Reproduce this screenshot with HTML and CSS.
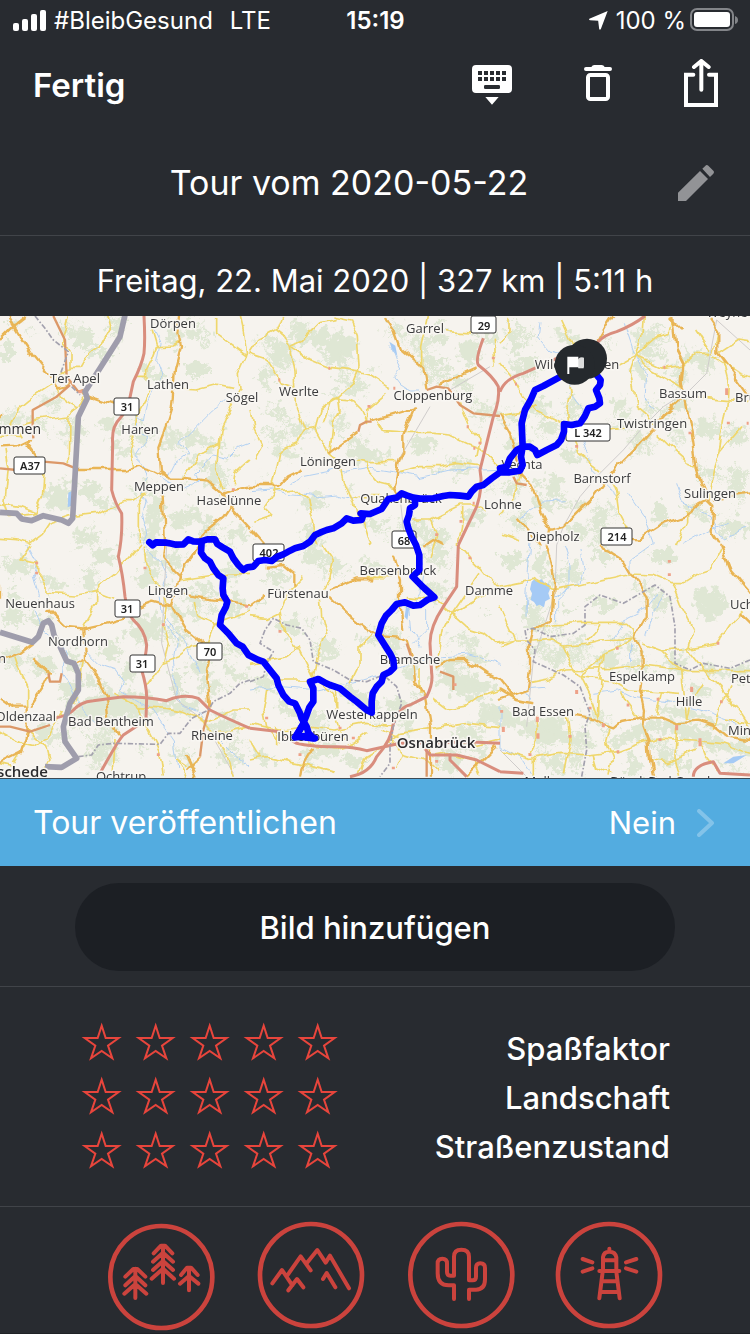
FILE: index.html
```html
<!DOCTYPE html>
<html lang="de">
<head>
  <meta charset="UTF-8" />
  <meta name="viewport" content="width=device-width, initial-scale=1.0"/>
  <title>Tour vom 2020-05-22</title>
  <link rel="stylesheet" href="styles.css">
</head>
<body>
  <div class="status-bar">
    <div class="status-left">
      <svg class="signal" viewBox="0 0 33 21" aria-hidden="true">
        <rect x="0" y="13" width="6" height="8" rx="2"/>
        <rect x="9" y="9" width="6" height="12" rx="2"/>
        <rect x="18" y="4" width="6" height="17" rx="2"/>
        <rect x="27" y="0" width="6" height="21" rx="2"/>
      </svg>
      <span class="carrier">#BleibGesund</span>
      <span>LTE</span>
    </div>
    <div class="status-time">15:19</div>
    <div class="status-right">
      <svg class="location" viewBox="648 35 56 56" aria-hidden="true"><path d="M703 35 L649 58 Q647 61 651 62 L675 64 L678 88 Q680 92 683 88 Z"/></svg>
      <span>100 %</span>
      <svg class="battery" viewBox="0 0 48 24" aria-hidden="true">
        <rect class="battery-case" x="1" y="1" width="42" height="21" rx="6"/>
        <rect x="4" y="4" width="36" height="15" rx="3"/>
        <path class="battery-cap" d="M45 8 Q48 9 48 12 Q48 15 45 16 Z"/>
      </svg>
    </div>
  </div>

  <header class="nav">
    <button class="done">Fertig</button>
    <button class="nav-btn" aria-label="Tastatur ausblenden">
      <svg width="40" height="40" viewBox="291 195 120 120">
        <path d="M303 195 H399 Q411 195 411 207 V267 Q411 279 399 279 H303 Q291 279 291 267 V207 Q291 195 303 195 Z M331 291 H371 L351 314 Z"/>
        <path class="cut" d="M309 213h12v12h-12z M327 213h12v12h-12z M345 213h12v12h-12z M363 213h12v12h-12z M381 213h12v12h-12z M309 231h12v12h-12z M327 231h12v12h-12z M345 231h12v12h-12z M363 231h12v12h-12z M381 231h12v12h-12z"/>
        <rect class="cut" x="327" y="255" width="48" height="12" rx="4"/>
      </svg>
    </button>
    <button class="nav-btn" aria-label="Löschen">
      <svg width="32" height="40" viewBox="627 195 96 120">
        <path d="M639 201 H655 Q658 195 664 195 H686 Q692 195 695 201 H711 Q717 201 717 207 Q717 213 711 213 H639 Q633 213 633 207 Q633 201 639 201 Z"/>
        <rect class="line" x="645" y="225" width="60" height="72" rx="7" stroke-width="12"/>
      </svg>
    </button>
    <button class="nav-btn" aria-label="Teilen">
      <svg width="34" height="52" viewBox="927 177 102 156">
        <path class="line" stroke-width="12" stroke-linecap="round" d="M955 224 H933 V315 H1023 V224 H1002 M979 269 V184 M957 201 L979 183 L1001 201"/>
      </svg>
    </button>
  </header>

  <section class="title-row">
    <h1>Tour vom 2020-05-22</h1>
    <button class="nav-btn" aria-label="Titel bearbeiten">
      <svg class="pencil" width="36" height="36" viewBox="909 498 108 108">
        <path d="M909 606 V581 L975 516 L999 540 L933 606 Z M982 509 L993 499 Q996 497 1000 500 L1015 515 Q1019 519 1015 524 L1005 534 Z"/>
      </svg>
    </button>
  </section>

  <p class="summary">Freitag, 22. Mai 2020 | 327 km | 5:11 h</p>

  <svg class="map" viewBox="0 316 750 462" role="img" aria-label="Karte der Tour">
    <defs>
      <filter id="ragged" filterUnits="userSpaceOnUse" x="0" y="0" width="2250" height="1410" color-interpolation-filters="sRGB">
        <feTurbulence type="fractalNoise" baseFrequency=".05" numOctaves="3" seed="4"/>
        <feDisplacementMap in="SourceGraphic" scale="70" xChannelSelector="R" yChannelSelector="G"/>
      </filter>
      <filter id="winding" filterUnits="userSpaceOnUse" x="0" y="0" width="2250" height="1410" color-interpolation-filters="sRGB">
        <feTurbulence type="fractalNoise" baseFrequency=".02" numOctaves="2" seed="9"/>
        <feDisplacementMap in="SourceGraphic" scale="28" xChannelSelector="R" yChannelSelector="G"/>
      </filter>
      <path id="wood-a" d="M0 20 L8 12 20 14 26 2 40 6 52 0 60 12 74 10 70 24 80 32 66 38 68 50 52 46 44 58 30 50 16 54 18 40 4 36 10 28 Z"/>
      <path id="wood-b" d="M4 8 L16 0 28 8 34 22 48 18 58 28 72 26 84 36 76 46 60 44 54 54 40 50 30 40 18 44 12 32 0 28 8 18 Z"/>
      <path id="wood-c" d="M10 0 L26 6 30 18 44 22 38 34 46 46 34 56 38 70 24 76 14 66 4 70 0 54 10 44 2 32 12 20 4 10 Z"/>
      <path id="wood-d" d="M0 6 L10 0 18 6 30 4 34 12 26 18 14 16 6 22 2 14 Z"/>
    </defs>
    <rect class="land" y="316" width="750" height="462"/>

    <!-- terrain and roads are drawn at three units per pixel -->
    <g transform="translate(0 310) scale(.33333)">
      <g class="woods" filter="url(#ragged)">
        <path d="M915 95 L940 60 975 50 1000 75 1015 65 1040 85 1070 80 1080 110 1060 130 1050 150 1020 160 1000 150 985 165 965 150 985 130 950 120 Z"/>
        <path d="M1380 95 L1430 90 1440 130 1420 165 1390 155 1375 130 Z"/>
        <path d="M470 560 L490 580 485 610 470 640 480 665 450 690 435 650 440 600 Z"/>
        <path d="M130 560 L150 530 180 525 205 500 210 600 150 600 Z"/>
        <path d="M500 895 L530 880 550 910 530 950 500 960 520 930 Z"/>
        <path d="M380 960 L420 920 470 915 490 950 470 985 420 1000 385 985 Z"/>
        <path d="M280 710 L345 705 340 755 275 765 Z"/>
        <path d="M230 1190 L330 1140 440 1150 480 1180 560 1160 600 1185 560 1215 450 1205 420 1230 330 1220 240 1240 Z"/>
        <path d="M1000 1120 L1060 1130 1090 1150 1150 1190 1110 1200 1060 1180 1010 1150 Z"/>
        <path d="M1290 1110 L1340 1080 1390 1100 1460 1110 1490 1140 1440 1165 1370 1160 1340 1130 Z"/>
        <path d="M1520 1190 L1570 1225 1650 1240 1700 1270 1770 1275 1780 1310 1740 1315 1690 1290 1640 1310 1590 1290 1540 1250 1460 1235 1460 1180 Z"/>
        <path d="M1820 1290 L1870 1270 1930 1235 2010 1225 2090 1250 2150 1285 2250 1310 2250 1335 2130 1320 2070 1290 1970 1260 1900 1290 1840 1305 Z"/>
        <path d="M2080 850 L2110 830 2150 840 2190 880 2150 920 2120 935 2090 900 Z"/>
        <path d="M1980 1185 L2050 1190 2140 1225 2190 1250 2180 1265 2100 1235 1980 1205 Z"/>
        <path d="M1700 1000 L1740 970 1760 980 1720 1005 Z"/>
        <path d="M1830 270 L1870 260 1885 290 1850 305 Z M1600 270 l30 -10 20 30 -40 15 Z"/>
        <use href="#scatter" transform="translate(2250 1420) scale(-1 -1)"/>
      </g>
      <g class="woods" id="scatter" filter="url(#ragged)">
        <use href="#wood-a" x="210" y="60"/><use href="#wood-b" x="260" y="100"/><use href="#wood-c" x="500" y="40"/>
        <use href="#wood-b" x="420" y="160"/><use href="#wood-a" x="550" y="150"/><use href="#wood-d" x="600" y="90"/>
        <use href="#wood-d" x="20" y="30"/><use href="#wood-c" x="0" y="80"/><use href="#wood-a" x="290" y="320"/>
        <use href="#wood-b" x="330" y="390"/><use href="#wood-a" x="230" y="510"/><use href="#wood-b" x="270" y="550"/>
        <use href="#wood-c" x="490" y="350"/><use href="#wood-a" x="530" y="360"/><use href="#wood-b" x="590" y="370"/>
        <use href="#wood-d" x="660" y="340"/><use href="#wood-b" x="560" y="430"/><use href="#wood-c" x="620" y="460"/>
        <use href="#wood-a" x="500" y="600"/><use href="#wood-b" x="560" y="590"/><use href="#wood-d" x="690" y="420"/>
        <use href="#wood-b" x="790" y="70"/><use href="#wood-a" x="800" y="110"/><use href="#wood-c" x="880" y="30"/>
        <use href="#wood-d" x="1100" y="170"/><use href="#wood-b" x="1080" y="400"/><use href="#wood-a" x="1040" y="410"/>
        <use href="#wood-d" x="990" y="240"/><use href="#wood-b" x="820" y="400"/><use href="#wood-d" x="860" y="340"/>
        <use href="#wood-a" x="1230" y="380"/><use href="#wood-b" x="1250" y="120"/><use href="#wood-d" x="1330" y="170"/>
        <use href="#wood-c" x="1300" y="30"/><use href="#wood-b" x="1220" y="620"/><use href="#wood-a" x="900" y="550"/>
        <use href="#wood-b" x="900" y="650"/><use href="#wood-d" x="1040" y="520"/><use href="#wood-c" x="910" y="640"/>
        <use href="#wood-a" x="1380" y="590"/><use href="#wood-d" x="1300" y="470"/><use href="#wood-b" x="1660" y="50"/>
        <use href="#wood-a" x="1560" y="140"/><use href="#wood-c" x="1520" y="60"/><use href="#wood-a" x="1900" y="60"/>
        <use href="#wood-b" x="1920" y="100"/><use href="#wood-d" x="1960" y="40"/><use href="#wood-c" x="1900" y="130"/>
        <use href="#wood-b" x="2040" y="110"/><use href="#wood-d" x="1990" y="160"/><use href="#wood-a" x="1570" y="260"/>
        <use href="#wood-b" x="1680" y="410"/><use href="#wood-d" x="1600" y="510"/><use href="#wood-a" x="1510" y="380"/>
        <use href="#wood-c" x="1640" y="490"/><use href="#wood-b" x="1590" y="550"/><use href="#wood-d" x="1730" y="570"/>
        <use href="#wood-a" x="1690" y="640"/><use href="#wood-c" x="1960" y="570"/><use href="#wood-b" x="2090" y="330"/>
        <use href="#wood-a" x="2170" y="350"/><use href="#wood-d" x="2120" y="480"/><use href="#wood-b" x="2190" y="620"/>
        <use href="#wood-a" x="1950" y="710"/><use href="#wood-b" x="1770" y="705"/><use href="#wood-a" x="1500" y="720"/>
        <use href="#wood-c" x="1600" y="720"/><use href="#wood-b" x="1770" y="850"/><use href="#wood-d" x="1690" y="890"/>
        <use href="#wood-c" x="1570" y="870"/><use href="#wood-a" x="1780" y="1020"/><use href="#wood-d" x="1820" y="1060"/>
        <use href="#wood-a" x="1990" y="1030"/><use href="#wood-b" x="2100" y="1050"/><use href="#wood-a" x="2180" y="1060"/>
        <use href="#wood-b" x="2060" y="1110"/><use href="#wood-a" x="1620" y="1330"/><use href="#wood-c" x="1880" y="1320"/>
        <use href="#wood-b" x="1990" y="1330"/><use href="#wood-d" x="2150" y="1350"/><use href="#wood-a" x="20" y="740"/>
        <use href="#wood-b" x="120" y="790"/><use href="#wood-c" x="20" y="840"/><use href="#wood-a" x="0" y="890"/>
        <use href="#wood-b" x="80" y="900"/><use href="#wood-d" x="40" y="1050"/><use href="#wood-a" x="90" y="1040"/>
        <use href="#wood-c" x="200" y="1020"/><use href="#wood-a" x="170" y="1110"/><use href="#wood-c" x="190" y="1170"/>
        <use href="#wood-b" x="250" y="1090"/><use href="#wood-a" x="290" y="990"/><use href="#wood-c" x="360" y="1050"/>
        <use href="#wood-a" x="400" y="780"/><use href="#wood-c" x="430" y="720"/><use href="#wood-b" x="540" y="830"/>
        <use href="#wood-a" x="650" y="760"/><use href="#wood-c" x="690" y="850"/><use href="#wood-a" x="560" y="1040"/>
        <use href="#wood-b" x="670" y="1060"/><use href="#wood-c" x="510" y="1080"/><use href="#wood-a" x="650" y="1210"/>
        <use href="#wood-b" x="640" y="1320"/><use href="#wood-d" x="410" y="1310"/><use href="#wood-b" x="250" y="1310"/>
        <use href="#wood-a" x="90" y="1240"/><use href="#wood-a" x="900" y="710"/><use href="#wood-b" x="970" y="730"/>
        <use href="#wood-a" x="830" y="920"/><use href="#wood-d" x="770" y="870"/><use href="#wood-b" x="1080" y="740"/>
        <use href="#wood-c" x="1150" y="970"/><use href="#wood-c" x="1210" y="1040"/><use href="#wood-a" x="760" y="1090"/>
        <use href="#wood-b" x="830" y="1170"/><use href="#wood-a" x="900" y="1200"/><use href="#wood-a" x="940" y="1290"/>
        <use href="#wood-b" x="1020" y="1320"/><use href="#wood-a" x="1150" y="1160"/><use href="#wood-c" x="1200" y="1200"/>
        <use href="#wood-a" x="1310" y="1040"/><use href="#wood-b" x="1380" y="1080"/><use href="#wood-c" x="1430" y="1180"/>
        <use href="#wood-b" x="1390" y="1010"/><use href="#wood-d" x="1440" y="900"/><use href="#wood-a" x="1310" y="1330"/>
        <use href="#wood-b" x="1390" y="1290"/><use href="#wood-a" x="1360" y="1240"/><use href="#wood-b" x="750" y="1310"/>
      </g>

      <path class="lake" d="M1595 815 L1605 806 1612 812 1624 808 1634 818 1648 822 1650 838 1645 850 1650 866 1636 874 1632 892 1618 884 1610 888 1602 876 1592 870 1596 850 1590 838 Z"/>
      <path class="lake" d="M205 548 l10 -5 -2 45 -10 4 Z M1168 95 l18 12 6 30 -14 -14 Z M1218 890 l10 5 -6 35 -8 -10 Z M2170 1360 l30 -20 40 -5 -40 25 Z"/>
      <g class="water" filter="url(#winding)">
        <path d="M460 60 L480 100 470 150 485 190 465 230 440 275 430 330 405 310 415 350 440 380 425 410 405 440 430 465 440 500 420 540 435 580 425 620 440 670 425 705"/>
        <path d="M750 400 L710 415 680 445 640 435 620 460 590 490 600 520 560 540 510 520 480 500"/>
        <path d="M700 260 L640 300 590 350 540 400 560 430 520 460 500 500"/>
        <path d="M1175 110 L1190 150 1205 180 1185 200 1200 220 1230 240 1260 240"/>
        <path d="M750 545 L820 540 860 550 950 560 1020 555 1070 570"/>
        <path d="M870 520 L910 500 1010 480 1040 490 1120 475 1180 485 1260 500 1350 480 1500 475"/>
        <path d="M1620 40 L1615 80 1650 120 1690 130 1720 180 1710 250 1750 300 1740 360 1760 420 1780 480 1830 530 1850 560"/>
        <path d="M1870 40 L1900 130 1940 200 1935 260 1960 300 M1880 550 L1930 620 1960 700 1890 750 1890 790"/>
        <path d="M2030 520 L2050 580 2130 620 2170 690 2240 650 M2050 700 L2120 660 2180 640 M1560 620 L1620 580 1700 575"/>
        <path d="M80 705 L110 760 100 800 115 850 105 900 130 960 200 1020 190 1090 250 1200 290 1240"/>
        <path d="M440 720 L480 760 500 800 480 860 490 930 530 990 520 1050 530 1140 545 1190 600 1210 630 1260 700 1330 750 1370"/>
        <path d="M500 930 L560 1000 600 1090 M250 1020 L290 1060 350 1080 370 1110 360 1140 450 1190 520 1290 530 1380"/>
        <path d="M750 1140 L850 1130 950 1140 1090 1110 1190 1080 1240 1060 1330 1040 1410 1035 1500 1060"/>
        <path d="M1250 710 L1270 780 1260 850 1230 900 1235 960 1260 1010 M1280 900 L1280 960 1240 1000"/>
        <path d="M1690 710 L1710 760 1710 830 1670 870 1670 930 M1740 720 L1750 780 1740 820 1660 860 M1590 700 L1580 800 1575 920"/>
        <path d="M1970 850 L1940 890 1880 920 1830 990 M1990 850 L1960 910 1940 980 M1895 1000 L1895 1050"/>
        <path d="M1780 1150 L1850 1140 1900 1165 2020 1180 2100 1200 2180 1230 2250 1260"/>
        <path d="M1500 1190 L1500 1310 1560 1340 1600 1400 M1590 1170 L1570 1140 1630 1135"/>
      </g>

      <g class="rail">
        <path d="M2250 120 L2150 30 2120 190 2070 240 1990 290 1930 350 1870 420 1800 490 1740 560 1690 650 1670 705 1665 850 1600 1050 1580 1250"/>
        <path d="M1350 240 L1470 170 M1290 290 L1190 460 M1200 560 L1215 700 M500 705 L485 1000 530 1170 610 1230 700 1390 M1500 1320 L1580 1400"/>
      </g>

      <g class="minor" filter="url(#winding)">
        <!-- north west -->
        <path d="M205 18 L195 60 180 105 210 125 210 175 240 175 260 140 300 115 330 60 320 18"/>
        <path d="M35 350 L60 290 90 265 150 225 210 175 M165 220 L200 280 235 300 255 260 M235 300 L207 318 205 460 M207 318 L110 330 40 350 60 380 0 375"/>
        <path d="M15 420 L25 480 15 570 30 620 110 610 130 560 135 490 120 440 M0 580 L60 590 110 610 M0 685 L60 690 90 700 130 670 150 640 210 620 290 610 370 575 400 575 435 550"/>
        <path d="M455 60 L470 110 520 108 540 95 M470 110 L455 150 440 180 440 205 410 205 M440 205 L450 240 410 310 405 370 390 430 400 480"/>
        <path d="M515 235 L590 240 650 225 700 235 M650 18 L650 70 740 135 715 190 720 240 690 300 660 360 655 400 600 430 580 460 550 505 M655 400 L650 480 670 540"/>
        <path d="M740 135 L730 60 720 18 M700 520 L705 490 750 450 M435 550 L415 590 415 700 M90 705 L60 750 110 760 110 790"/>
        <!-- north centre -->
        <path d="M845 18 L830 60 850 75 870 110 900 95 960 35 1010 25 M835 55 L780 85 750 130 L795 145 840 215 890 230 M870 110 L930 150 990 175 1070 185 1110 195 1170 235 M1000 18 L1055 30 1075 80 1080 170 1060 220 1015 260 990 275 970 340 M870 110 L885 180 890 300 915 360 890 400 840 425 820 520 825 540"/>
        <path d="M915 360 L945 355 960 300 1000 265 1050 270 1080 300 1100 340 1100 300 1160 250 M945 355 L970 400 985 430 1020 460 1030 500 1055 570 M1015 260 L1020 300 1000 330 990 430 M825 540 L880 535 920 570 935 630 950 705 M825 540 L790 590 820 620 760 640"/>
        <path d="M1130 330 L1150 365 1220 370 1300 370 1350 375 1400 400 1440 415 1470 440 1500 470 M1070 450 L1100 455 1190 455 M1100 455 L1105 480 1140 520 1180 530 M1200 485 L1260 470 1320 470 1370 460 1440 470 M1285 18 L1265 110 1265 175 M1335 65 L1430 70 M1375 280 L1400 340 1440 390 1430 440"/>
        <path d="M1480 80 L1485 170 M1055 570 L1070 620 1090 640 1110 705 M1055 570 L1080 560 1160 560 M1240 630 L1290 630 1330 610 1380 585 1420 585 1460 600 M1290 630 L1310 680 1290 740 M1385 590 L1385 650 1375 705 M750 300 L760 360 785 410 765 445"/>
        <!-- north east -->
        <path d="M1685 30 L1720 105 M1500 160 L1545 215 1570 260 1610 300 1650 320 1690 340 M1500 320 L1560 310 1610 280 M1500 100 L1530 60 1530 20 M1710 230 L1715 260 1700 310 1705 350 1730 400 1740 430 1800 480"/>
        <path d="M1930 18 L1925 80 1905 135 1850 165 M1905 135 L1970 80 2010 70 2020 18 M1905 135 L1890 180 1910 290 1945 320 1970 350 M1905 135 L1950 180 2060 240 M1905 135 L1990 175 2050 165 2090 130 2140 130 2155 70 M2080 260 L2250 275 M2170 160 L2185 220 2180 300 2160 420 2140 480 2125 570 M2220 350 L2160 420 M1970 370 L2020 420 2060 455 2085 465"/>
        <path d="M1830 360 L1860 355 1900 345 M1830 490 L1850 540 1860 610 1880 650 1885 690 M1560 500 L1530 580 1500 620 M2060 600 L2060 640 2030 705 M1500 670 L1560 690 M2090 60 L2130 120 M2160 130 L2220 90 2250 95 M2140 140 L2200 180 2250 200"/>
        <!-- south east -->
        <path d="M1500 825 L1600 805 1660 838 1740 825 1800 810 1890 792 1960 795 2010 815 2060 815 2100 790 2130 780 2160 720 M1500 1010 L1545 990 1500 890 M1545 990 L1600 990 1650 985 1690 1005 1760 1000 1800 990 1900 985 M1600 960 L1660 945 1750 940 1880 940 1900 960 1905 985 M1760 990 L1800 945"/>
        <path d="M1590 1120 L1640 1110 1700 1080 1840 1075 1930 1065 2010 1075 2060 1085 2250 1085 M1690 1005 L1720 1070 1740 1100 1780 1180 1795 1225 M1740 1100 L1830 1110 1880 1140 1980 1145 2040 1150 M1740 1100 L1790 1060 1810 1030 1850 1015 1900 985 M1810 1030 L1800 1100 1795 1225"/>
        <path d="M2015 815 L2040 880 2080 960 2065 1020 M1930 1005 L1985 1025 2060 1015 2150 1000 2190 940 2230 900 M1985 1025 L2020 1060 2045 1080 2060 1230 M2065 1020 L2120 1090 2160 1130 2210 1200 2250 1260 M1985 1145 L1970 1210 M2110 1120 L2070 1180 2060 1230 M1865 1150 L1880 1180 1910 1220 M2190 1120 L2160 1190 2140 1260"/>
        <path d="M1500 1320 L1540 1330 1590 1345 1680 1330 1760 1335 1850 1325 1920 1300 1970 1285 2000 1285 2080 1290 2160 1300 2250 1330 M1610 1220 L1615 1280 1590 1330 M1700 1200 L1710 1290 1690 1390 M1830 1260 L1820 1300 1840 1350 1830 1400 M1950 1350 L2000 1355 2090 1320 M2030 1250 L2025 1340 2040 1400 M2100 1290 L2120 1340 2150 1380 M1600 1340 L1600 1400 M2250 1240 L2180 1230 M1780 1335 L1790 1370 1840 1390"/>
        <!-- south west -->
        <path d="M110 790 L135 820 135 850 230 855 290 845 300 830 350 790 400 730 420 705 M290 845 L290 880 250 950 M340 1380 L345 1290 M290 845 L340 865 M430 710 L435 770 490 840 M490 840 L500 880 490 950 505 1000 490 1060 M490 1060 L440 1130 M490 1060 L540 1040 580 1010 620 1000 640 945 750 900 M540 810 L640 795 750 790"/>
        <path d="M45 1040 L60 1090 80 1130 80 1190 M0 1265 L60 1300 100 1310 140 1280 190 1200 M80 1250 L70 1310 40 1360 M80 1260 L140 1310 150 1350 130 1390 M250 1050 L240 1120 220 1180 M350 1160 L420 1190 500 1195 550 1205 620 1235 700 1200 750 1200 M340 1150 L420 1190 440 1250 480 1330 490 1400 M0 1360 L40 1370 60 1400 M560 1400 L530 1350 560 1370 M600 1220 L640 1270 680 1340 700 1400 M580 870 L590 920 650 945 M750 1250 L650 1270"/>
        <path d="M910 705 L930 700 M910 800 L860 850 840 900 850 960 900 1020 940 1100 1000 1150 1010 1200 M970 705 L1000 750 990 800 960 850 965 920 980 980 950 1050 940 1100 M750 920 L800 925 840 905 M750 1060 L860 1040 900 1010 M1120 975 L1080 1010 1080 1060 1050 1120 M800 1140 L790 1200 800 1250 840 1300 M840 1110 L960 1110 M1100 800 L1170 800 1210 780"/>
        <path d="M1380 705 L1410 740 1440 770 1480 820 1500 830 M1220 860 L1310 870 1400 950 1450 965 1490 1000 1545 990 M1440 790 L1350 920 1330 960 1310 1060 M1500 830 L1350 915 M1310 880 L1290 840 M1010 1140 L1010 1230 1030 1290 M900 1260 L950 1310 1010 1320 1060 1300 1100 1270 M750 1240 L840 1260 920 1250 1000 1260 1100 1240 1180 1250 M750 1350 L800 1340 900 1360 1000 1390 M1080 1400 L1100 1340 1150 1310 1200 1270 1330 1250 1400 1240 1500 1250"/>
        <path d="M1300 1170 L1340 1200 1400 1190 1440 1160 1500 1140 M1210 1330 L1280 1350 1320 1390 M1440 1400 L1420 1350 1350 1330 1300 1340 M1400 1310 L1460 1300 1500 1290 M1180 1290 L1210 1330 1190 1380 M1140 1260 L1200 1280 M1260 1080 L1260 1150 M750 1290 L780 1340 M830 1250 L830 1310"/>
      </g>

      <g class="major" filter="url(#winding)">
        <path d="M25 18 L60 75 100 135 150 195 175 235 210 225 M0 90 L40 50 80 18 M0 330 L10 320 M0 412 L50 410 90 390 85 400 115 440 M240 245 L290 265 345 285"/>
        <path d="M540 18 L535 70 543 110 525 180 515 290 490 370 475 410 480 480 510 505 560 507 620 515 670 555 690 590 750 655 M235 480 L380 480 420 468 460 480 510 505 M690 590 L670 620 620 660 600 690 M488 550 L495 700 490 740 520 780 540 800 M670 550 L700 540 750 530"/>
        <path d="M750 528 L835 528 860 500 910 475 M1155 18 L1180 60 1200 115 1270 175 1280 235 M985 430 L1075 365 M1110 335 L1160 320 1245 295 1210 380 1210 420 1195 460 1190 500 1180 530 1190 550 M1320 225 L1430 175 M750 660 L790 705"/>
        <path d="M1780 120 L1820 50 1840 18 M2020 18 L2030 120 2050 160 2045 220 2055 260 M2050 265 L1990 320 1920 400 1840 480 1780 560 1720 620 1690 650 1650 660 M2055 265 L2080 400 2090 470 2100 520 2120 570 2100 580 2050 620 1990 640 1920 685 1850 682 M1500 315 L1530 370 1545 430 1560 500 1600 540 1620 600 1650 660 1640 705 M2120 570 L2140 590 2135 660 2160 700 M2120 18 L2155 70 2155 130 2200 190 2250 260 M2135 570 L2250 550 M2050 60 L2010 20"/>
        <path d="M1640 705 L1655 760 1662 810 1655 930 1600 960 1590 1000 1590 1080 1580 1140 1500 1170 M1800 705 L1870 750 1900 800 1940 860 1940 920 1905 985 1925 1030 1925 1100 1920 1140 1935 1200 1930 1250 1945 1290 1950 1350 1960 1400 M2160 705 L2190 780 2250 850 M1500 1140 L1550 1170 1600 1180 M1720 1215 L1780 1225 1810 1245 1840 1255 1870 1230 1920 1220 1980 1220 2030 1240 2090 1235 2150 1255 2180 1280 2250 1290 M2220 910 L2250 940"/>
        <path d="M140 895 L195 950 250 955 340 935 375 925 M250 955 L255 1050 300 1110 320 1160 330 1230 355 1275 M100 1000 L60 1030 0 1050 M100 1045 L150 1090 130 1130 90 1190 M0 1160 L40 1190 80 1190 M80 1190 L80 1260 60 1330 0 1360 M250 1050 L230 1060 M520 890 L560 960 610 1000 M630 1050 L620 1110 628 1190 M540 800 L560 760 600 705 M540 850 L640 865 750 880 M540 800 L530 850 515 890 460 875 420 890 M600 1340 L560 1380 M0 830 L0 860 M560 1330 L590 1400"/>
        <path d="M750 885 L790 855 M800 770 L850 765 880 790 880 830 M990 840 L1070 805 1120 805 M990 860 L1050 920 1090 950 1130 975 1200 980 1220 990 1240 1060 M1180 740 L1200 810 1200 870 1210 960 M1240 1060 L1245 1110 1275 1160 1290 1250 1290 1400 M1310 1070 L1350 1050 1400 1050 1460 1090 1500 1110 1540 1160 M900 1400 L905 1370 940 1310 M1400 1400 L1430 1370 1490 1310 M1550 620 L1620 705 M1330 705 L1300 690 1270 710"/>
      </g>
      <g class="trunk">
        <path d="M160 18 L195 90 200 200 235 245 250 240 M210 225 L170 260 98 300 98 345 100 385 M130 455 L190 460 235 478 M0 475 L50 480 M1075 365 L1080 345 1100 335 1115 335 M1280 240 L1310 230 1345 235 1380 285 1420 310 1500 318 M1540 500 L1550 520 1580 525"/>
        <path d="M0 1250 L30 1250 90 1265 150 1245 M145 1090 L150 1115 180 1115 185 1090 M628 1195 L610 1260 600 1340 M1220 1000 L1240 1060 M1320 1085 L1360 1100 1360 1140 M1280 1290 L1280 1400"/>
      </g>
      <g class="motorway">
        <path d="M432 18 Q436 90 432 130 Q425 165 400 215 L385 285 Q380 300 360 325 Q334 350 338 400 L335 540 Q345 580 365 610 Q368 680 355 740 Q368 790 375 860 Q382 910 400 930 Q435 960 440 1005 Q438 1040 425 1080 Q440 1130 440 1160 L438 1230 Q385 1265 370 1275 Q355 1290 300 1390"/>
        <path d="M160 1225 Q195 1220 215 1205 Q240 1175 280 1172 L370 1160 Q440 1160 500 1172 Q550 1150 595 1165 L630 1200 Q680 1225 750 1255"/>
        <path d="M750 1255 L840 1265 Q865 1288 890 1300 Q940 1312 1010 1310 Q1060 1310 1100 1322 L1200 1300 Q1300 1300 1400 1295 L1500 1300 M1050 1400 Q1110 1390 1130 1340 Q1175 1290 1180 1240 Q1200 1190 1230 1185 L1280 1160 Q1300 1120 1295 1090 L1290 1000 Q1290 950 1330 890 L1370 830 1375 705"/>
        <path d="M1450 85 Q1425 150 1435 165 Q1480 200 1495 230 Q1500 270 1480 320 L1440 480 Q1450 530 1430 590 L1375 705 M1500 245 Q1515 205 1570 190 L1670 145 M1790 100 Q1810 75 1850 65 Q1900 45 1935 18"/>
        <path d="M1270 1310 L1290 1335 1370 1335 1430 1350 1500 1385 M1350 1330 L1350 1350 1400 1400 M1500 1385 L1570 1390 M2080 1400 Q2080 1365 2140 1355 L2160 1390 2250 1395"/>
      </g>
      <g class="towns">
        <path d="M110 755v8 M110 785v8 M435 770v8 M490 940v8 M740 885v8 M700 535v8 M235 245h12 M985 175h6 M835 210h6 M1107 285v8 M1180 235h6 M1400 350h6 M1440 395v8 M1420 415h6 M1383 630v8 M1418 580h6 M1310 670v8 M1480 140v8 M1730 405v8 M1545 222h6 M1990 172h6 M2180 235v20 M2185 335v8 M2240 340h6 M2070 365v8"/>
        <path d="M2008 750v8 M2008 790v8 M1848 1015h8 M2150 1000h8 M1730 1140v12 M1770 1190v8 M1880 1185h8 M1970 1168h8 M2075 1130v16 M2160 1175h8 M1505 1200v8 M1510 1250v16 M1612 1220v16 M1614 1270v16 M1590 1330v8 M1710 1275v8 M1850 1325h8 M1980 1285v8 M2030 1245v16 M2100 1285v24 M1810 1240v12 M475 1330v8 M800 1220v8 M1310 1350v8 M1180 1370v8 M900 1330v8 M1060 1280v8 M1020 1250v8 M840 960v8 M1365 1120v8 M1410 740v8"/>
      </g>

      <g class="state-border">
        <path d="M105 18 L135 55 160 90 205 125 180 195 M215 230 L240 255"/>
        <path d="M235 1340 L275 1335 295 1305 340 1300 480 1303 505 1270 540 1270 575 1225 625 1200 640 1175 690 1150 720 1120 750 1110"/>
        <path d="M750 1115 L790 1100 800 1060 820 1025 780 1000 795 960 820 925 860 945 905 955 930 990 940 1055 1000 1080 1050 1110 1100 1115 1150 1095 1190 1130 1205 1180 1180 1250 1170 1310 1170 1360 1140 1400"/>
        <path d="M1745 1400 L1760 1320 1755 1250 1770 1210 1740 1130 1690 1095 1600 1055 1605 1020 1580 990 1575 960 1600 955 1650 980 1720 970 1755 945 1755 890 1800 855 1870 880 1965 825 2010 860 2025 950 2025 1060 2070 1080 2110 1060 2190 1075 2250 1050"/>
      </g>
      <path class="border" d="M375 15 L360 80 300 175 255 245 262 265 235 320 218 625 205 640 185 630 130 617 95 632 65 627 50 610 0 607"/>
      <path class="border" d="M0 967 L97 997 115 980 130 940 145 932 155 945 162 975 180 1010 200 1053 222 1060 235 1090 235 1140 210 1180 190 1250 195 1295 230 1345 185 1372 135 1370"/>
    </g>

    <g class="places">
      <text x="173" y="328">Dörpen</text><text x="75" y="383">Ter Apel</text><text x="168" y="389">Lathen</text>
      <text x="242" y="402">Sögel</text><text x="299" y="396">Werlte</text><text x="425" y="333">Garrel</text>
      <text x="433" y="400">Cloppenburg</text><text x="140" y="434">Haren</text><text x="159" y="491">Meppen</text>
      <text x="229" y="505">Haselünne</text><text x="328" y="466">Löningen</text><text x="401" y="503">Quakenbrück</text>
      <text x="503" y="509">Lohne</text><text x="522" y="469">Vechta</text><text x="602" y="483">Barnstorf</text>
      <text x="683" y="398">Bassum</text><text x="652" y="428">Twistringen</text><text x="710" y="498">Sulingen</text>
      <text x="553" y="541">Diepholz</text><text x="577" y="369">Wildeshausen</text><text x="727" y="317">Weyhe</text>
      <text x="168" y="595">Lingen</text><text x="298" y="598">Fürstenau</text><text x="398" y="575">Bersenbrück</text>
      <text x="489" y="595">Damme</text><text x="40" y="608">Neuenhaus</text><text x="78" y="646">Nordhorn</text>
      <text x="410" y="664">Bramsche</text><text x="642" y="681">Espelkamp</text><text x="689" y="706">Hille</text>
      <text x="543" y="716">Bad Essen</text><text x="111" y="726">Bad Bentheim</text><text x="212" y="740">Rheine</text>
      <text x="313" y="741">Ibbenbüren</text><text x="372" y="719">Westerkappeln</text><text x="121" y="781">Ochtrup</text>
      <text x="541" y="786">Melle</text><text x="630" y="786">Bünde</text><text x="700" y="786">Bad Oeynhausen</text>
      <g class="from-edge">
        <text x="735" y="402">Bruchhausen</text><text x="730" y="609">Uchte</text>
        <text x="731" y="683">Petershagen</text><text x="728" y="735">Minden</text>
      </g>
      <g class="to-edge">
        <text x="56" y="721">Oldenzaal</text><text x="6" y="663">Almelo Verden</text>
        <text class="city" x="41" y="434">Emmen</text><text class="city big" x="48" y="777">Enschede</text>
      </g>
      <text class="city big" x="436" y="748">Osnabrück</text>
    </g>

    <g class="shields">
      <rect x="114" y="398" width="25" height="17" rx="2"/><text x="127" y="411">31</text>
      <rect x="471" y="316" width="25" height="17" rx="2"/><text x="484" y="330">29</text>
      <rect x="14" y="457" width="31" height="17" rx="2"/><text x="30" y="470">A37</text>
      <rect x="566" y="424" width="44" height="17" rx="2"/><text x="588" y="437">L 342</text>
      <rect x="601" y="528" width="31" height="17" rx="2"/><text x="617" y="541">214</text>
      <rect x="253" y="544" width="31" height="17" rx="2"/><text x="269" y="557">402</text>
      <rect x="392" y="531" width="24" height="17" rx="2"/><text x="404" y="545">68</text>
      <rect x="115" y="600" width="25" height="17" rx="2"/><text x="127" y="613">31</text>
      <rect x="130" y="655" width="25" height="17" rx="2"/><text x="142" y="668">31</text>
      <rect x="197" y="643" width="25" height="17" rx="2"/><text x="210" y="656">70</text>
    </g>

    <g transform="translate(0 310) scale(.33333)">
      <path class="route" d="M448 697 L458 706 468 697 500 698 528 704 550 703 565 688 580 694 600 695 622 688 645 688 652 702 668 712 690 725 700 745 715 765 730 780 742 772 760 770 775 753 795 750 815 753 832 740 850 733 870 722 885 715 910 708 930 695 945 675 960 668 980 660 1000 655 1025 640 1040 625 1060 632 1085 630 1090 615 1082 610 1110 612 1145 597 1155 582 1165 567 1190 563 1205 550 1220 556 1240 563 1260 566 1300 565 1330 558 1350 555 1380 557 1405 560 1415 545 1430 530 1450 525 1475 505 1500 487 1530 487 1560 482 1568 465 1563 440 1568 410 1565 340 1575 300 1592 270 1605 240 1630 228 1700 190"/>
      <path class="route" d="M1500 475 L1520 470 1530 445 1550 420 1570 410 1590 410 1605 420 1612 435 1640 420 1670 405 1683 390 1692 365 1692 342 1715 345 1740 340 1755 318 1765 295 1785 290 1800 280 1798 265 1788 240 1800 225 1802 210 1790 195 1780 170"/>
      <path class="route" d="M1245 567 L1245 585 1230 595 1227 615 1220 635 1225 655 1235 680 1248 705 1258 735 1258 780 1238 800 1270 832 1303 862 1285 868 1260 885 1240 887 1215 877 1190 882 1175 900 1158 917 1145 940 1135 975 1152 1002 1170 1030 1180 1050 1182 1073 1170 1085 1150 1095 1145 1115 1130 1130 1118 1150 1115 1175 1115 1208 1100 1200 1070 1175 1050 1160 1020 1135 990 1125 975 1118 955 1107 940 1112 930 1115 940 1135 940 1175 928 1192 920 1215 910 1240 890 1278 900 1280 940 1285 925 1268 920 1250 905 1225 900 1210 885 1180 868 1175 850 1155 835 1125 830 1105 810 1080 790 1055 775 1050 745 1035 728 1010 710 1000 685 970 660 945 665 915 678 890 682 875 670 855 668 835 670 805 655 795 640 775 630 755 615 745 603 728 605 695"/>
      <path class="route" d="M905 1250 L885 1282 915 1278 945 1285"/>
      <g class="marker">
        <circle cx="1761" cy="146" r="60"/>
        <circle cx="1724" cy="164" r="60"/>
        <path class="flag" d="M1702 140 h33 v8 h16 v27 h-16 v-3 h-27 v20 h-6 Z"/>
        <path class="fold" d="M1735 146 q8 -6 17 -3 v27 q-9 8 -17 1 Z"/>
      </g>
    </g>
  </svg>

  <button class="publish">
    <span>Tour veröffentlichen</span>
    <span class="publish-value">Nein
      <svg width="17" height="28" viewBox="0 0 17 28" aria-hidden="true"><path d="M2 2 L15 14 L2 26"/></svg>
    </span>
  </button>

  <section class="add-image">
    <button>Bild hinzufügen</button>
  </section>

  <section class="ratings">
    <div class="stars"></div>
    <ul class="rating-labels">
      <li>Spaßfaktor</li>
      <li>Landschaft</li>
      <li>Straßenzustand</li>
    </ul>
  </section>

  <section class="features">
    <button aria-label="Wald">
      <svg viewBox="51 60 324 330">
        <circle cx="214" cy="231" r="153"/>
        <path d="M136 206 V294 M106 230 L130 207 H142 L166 230 M106 256 L136 228 L166 256 M103 281 L136 252 L169 281 M219 137 V249 M191 160 L213 137 H225 L247 160 M189 185 L219 158 L249 185 M189 210 L219 183 L249 210 M185 236 L219 206 L252 236 M297 203 V271 M273 225 L291 203 H303 L323 225 M270 251 L297 228 L325 251"/>
      </svg>
    </button>
    <button aria-label="Berge">
      <svg viewBox="501 60 324 330">
        <circle cx="663" cy="225" r="153"/>
        <path d="M547 250 L576 210 L607 256 M592 226 L632 169 L662 211 M650 190 L682 150 L707 188 L720 167 L777 265 M595 271 L621 237 L640 262 M699 237 L710 219 L736 262"/>
      </svg>
    </button>
    <button aria-label="Wüste">
      <svg viewBox="51 60 324 330">
        <circle cx="214" cy="225" r="153"/>
        <path d="M192 297 V256 H176 Q143 256 143 220 V190 Q143 176 157 176 Q171 176 171 190 V216 Q171 227 181 227 H192 V170 Q192 149 214 149 Q237 149 237 170 V241 H248 Q258 241 258 230 V204 Q258 190 271 190 Q285 190 285 204 V238 Q285 269 258 269 H237 V297"/>
      </svg>
    </button>
    <button aria-label="Küste">
      <svg viewBox="501 60 324 330">
        <circle cx="657" cy="225" r="153"/>
        <path d="M658 146 V152 M639 212 V172 Q641 155 658 155 Q676 155 679 172 V212 M639 181 H679 M628 213 H688 M638 215 L628 295 M679 215 L689 295 M636 244 H682 M632 276 H685 M578 177 L607 187 M578 215 L607 205 M739 177 L708 187 M739 215 L708 205"/>
      </svg>
    </button>
  </section>

  <script>
    // five empty stars for each rating
    const stars = document.querySelector(".stars");
    for (const label of ["Spaßfaktor", "Landschaft", "Straßenzustand"]) {
      for (let i = 1; i <= 5; i++) {
        stars.innerHTML += `<button aria-label="${label} ${i}"><svg viewBox="0 0 162 162"><path d="M80 29 L92 66 L131 66 L99 89 L112 127 L80 105 L48 127 L61 89 L29 66 L68 66 Z"/></svg></button>`;
      }
    }
  </script>
</body>
</html>
```
FILE: styles.css
```css
* {
  box-sizing: border-box;
}
body {
  margin: 0;
  background: #282b30;
  color: #fff;
  font-family: Inter, "Liberation Sans", sans-serif;
  font-size: 31px;
}
button {
  padding: 0;
  border: none;
  background: none;
  color: inherit;
  font: inherit;
  cursor: pointer;
}
svg {
  display: block;
  fill: #fff;
}

/* status bar */
.status-bar {
  display: grid;
  grid-template-columns: 1fr auto 1fr;
  align-items: center;
  height: 40px;
  padding: 0 12px 0 13px;
  font-size: 24px;
}
.status-left, .status-right {
  display: flex;
  align-items: center;
}
.status-right {
  justify-content: flex-end;
}
.signal {
  width: 33px;
  height: 21px;
  margin-right: 8px;
}
.carrier {
  margin-right: 17px;
}
.status-time {
  font-weight: 600;
}
.location {
  width: 19px;
  height: 19px;
  margin-right: 8px;
}
.battery {
  width: 48px;
  height: 24px;
  margin-left: 4px;
}
.battery-case {
  fill: none;
  stroke: #838589;
  stroke-width: 2;
}
.battery-cap {
  fill: #838589;
}

/* toolbar and title */
.nav {
  display: flex;
  align-items: center;
  gap: 70px;
  height: 90px;
  padding: 0 32px 0 33px;
}
.done {
  margin-right: auto;
  font-size: 33px;
  font-weight: 600;
}
.nav-btn .cut {
  fill: #282b30;
}
.nav-btn .line {
  fill: none;
  stroke: #fff;
}
.title-row {
  display: flex;
  align-items: center;
  height: 106px;
  padding: 0 36px 0 20px;
  border-bottom: 1px solid #414449;
}
h1 {
  flex: 1;
  margin: 0;
  font-size: 34px;
  font-weight: 400;
  text-align: center;
}
.nav-btn .pencil {
  fill: #929396;
}
.summary {
  margin: 0;
  padding-top: 10px;
  line-height: 70px;
  text-align: center;
}

/* map */
.map {
  width: 100%;
  height: auto;
  overflow: hidden;
}
.map path {
  fill: none;
  stroke-linejoin: round;
}
.land {
  fill: #f6f3ee;
}
.map .woods path, .map .woods use, .map defs path {
  fill: #dfe7d4;
}
.water path {
  stroke: #b3d1f2;
  stroke-width: 3;
}
.map .lake {
  fill: #a5caf5;
}
.rail {
  stroke: #cfcccb;
  stroke-width: 3;
}
.minor {
  stroke: #efd76c;
  stroke-width: 5;
}
.major {
  stroke: #e9b555;
  stroke-width: 7;
}
.trunk {
  stroke: #dc9868;
  stroke-width: 7;
}
.motorway {
  stroke: #d98d7d;
  stroke-width: 9;
}
.towns {
  stroke: #eea188;
  stroke-width: 9;
}
.state-border {
  stroke: #a3a1ae;
  stroke-width: 5;
  stroke-dasharray: 16 6 5 6;
}
.border {
  stroke: #9f9dac;
  stroke-width: 17;
}
.places {
  fill: #3a3a3c;
  stroke: #f9f7f3;
  stroke-width: 3px;
  stroke-linejoin: round;
  paint-order: stroke;
  font-family: "Open Sans", "Noto Sans", sans-serif;
  font-size: 13px;
  text-anchor: middle;
}
.from-edge {
  text-anchor: start;
}
.to-edge {
  text-anchor: end;
}
.city {
  fill: #2c2c2e;
  font-size: 14px;
  font-weight: 500;
}
.big {
  font-size: 15px;
  font-weight: 600;
}
.shields rect {
  fill: #fff;
  stroke: #333;
}
.shields text {
  fill: #222;
  font-family: "Noto Sans", sans-serif;
  font-size: 11px;
  font-weight: 600;
  text-anchor: middle;
}
.route {
  stroke: #00f;
  stroke-width: 20;
  stroke-linecap: round;
}
.marker circle {
  fill: #25292d;
}
.map .marker .flag {
  fill: #fff;
}
.map .marker .fold {
  fill: #dcdddd;
}

/* publish row */
.publish {
  display: flex;
  justify-content: space-between;
  align-items: center;
  width: 100%;
  height: 88px;
  padding: 0 36px 0 33px;
  border-top: 1px solid #3c4a55;
  background: #53ace0;
  font-size: 32px;
}
.publish-value {
  display: flex;
  align-items: center;
  gap: 21px;
  font-size: 31px;
}
.publish-value svg {
  fill: none;
  stroke: #83c3e9;
  stroke-width: 4;
  stroke-linecap: round;
  stroke-linejoin: round;
}

/* image button */
.add-image {
  padding: 17px 75px 15px;
  border-bottom: 1px solid #414449;
}
.add-image button {
  display: block;
  width: 100%;
  height: 88px;
  border-radius: 44px;
  background: #1c1f24;
  font-weight: 500;
}

/* ratings */
.ratings {
  display: flex;
  justify-content: space-between;
  align-items: center;
  padding: 29px 80px 28px 75px;
  border-bottom: 1px solid #414449;
}
.stars {
  display: grid;
  grid-template-columns: repeat(5, 54px);
}
.stars svg {
  width: 54px;
  height: 54px;
  fill: none;
  stroke: #e8453c;
  stroke-width: 6;
}
.rating-labels {
  margin: 0;
  padding: 0;
  list-style: none;
  font-weight: 500;
  line-height: 49px;
  text-align: right;
}

/* feature icons */
.features {
  display: flex;
  gap: 42px;
  padding: 13px 85px 3px 107px;
  border-bottom: 1px solid #1f2226;
}
.features svg {
  width: 108px;
  height: 110px;
  overflow: visible;
  fill: none;
  stroke: #cb433d;
  stroke-width: 12;
  stroke-linecap: round;
  stroke-linejoin: round;
}
.features circle {
  stroke-width: 14;
}
```
